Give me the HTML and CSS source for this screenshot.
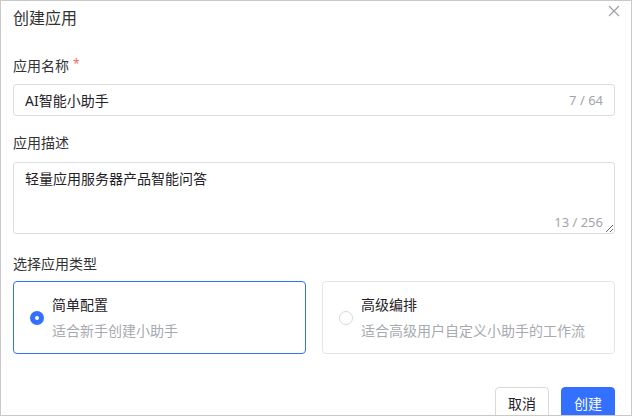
FILE: index.html
```html
<!DOCTYPE html>
<html lang="zh-CN">
<head>
<meta charset="utf-8">
<title>创建应用</title>
<link rel="stylesheet" href="styles.css">
</head>
<body>
<div class="modal">
  <div class="modal-header">
    <span class="modal-title">创建应用</span>
    <button class="close-btn" aria-label="关闭">
      <svg width="12" height="12" viewBox="0 0 12 12"><path d="M1 1L11 11M11 1L1 11" stroke="#9a9ea6" stroke-width="1.1" fill="none"/></svg>
    </button>
  </div>
  <div class="modal-body">
    <div class="field-label first">应用名称<span class="req">*</span></div>
    <div class="input-wrap">
      <input class="text-input" type="text" value="AI智能小助手">
      <span class="count count-input">7 / 64</span>
    </div>

    <div class="field-label">应用描述</div>
    <div class="textarea-wrap">
      <textarea class="text-area">轻量应用服务器产品智能问答</textarea>
      <span class="count count-area">13 / 256</span>
    </div>

    <div class="field-label third">选择应用类型</div>
    <div class="type-grid">
      <div class="type-card selected">
        <span class="radio checked"></span>
        <div class="type-text">
          <div class="type-title">简单配置</div>
          <div class="type-desc">适合新手创建小助手</div>
        </div>
      </div>
      <div class="type-card">
        <span class="radio"></span>
        <div class="type-text">
          <div class="type-title">高级编排</div>
          <div class="type-desc">适合高级用户自定义小助手的工作流</div>
        </div>
      </div>
    </div>

    <div class="footer">
      <button class="btn btn-default">取消</button>
      <button class="btn btn-primary">创建</button>
    </div>
  </div>
</div>
</body>
</html>
```

FILE: styles.css
```css
html, body {
  margin: 0;
  padding: 0;
  background: #ffffff;
}

body {
  font-family: "Noto Sans", "Noto Sans CJK SC", sans-serif;
  color: #1f2329;
}

.modal {
  box-sizing: border-box;
  width: 632px;
  height: 416px;
  border: 1px solid #c9c9c9;
  overflow: hidden;
  position: relative;
  background: #fff;
}

.modal-header {
  height: 34px;
  padding-left: 12px;
  display: flex;
  align-items: center;
}

.modal-title {
  font-size: 16px;
  line-height: 34px;
  color: #333333;
}

.close-btn {
  position: absolute;
  top: 3px;
  right: 10px;
  width: 14px;
  height: 14px;
  padding: 0;
  border: none;
  background: transparent;
  display: flex;
  align-items: center;
  justify-content: center;
}

.modal-body {
  padding: 0 16px 0 12px;
}

.field-label {
  font-size: 14px;
  line-height: 22px;
  color: #333333;
  margin-top: 16px;
  margin-bottom: 8px;
}

.field-label.first {
  margin-top: 20px;
  margin-bottom: 6px;
}

.field-label.third {
  margin-top: 19px;
  margin-bottom: 6px;
}

.req {
  color: #f76a64;
  margin-left: 4px;
  font-size: 12px;
  position: relative;
  top: -3px;
}

.input-wrap, .textarea-wrap {
  position: relative;
}

.text-input, .text-area {
  box-sizing: border-box;
  width: 100%;
  border: 1px solid #dadde2;
  border-radius: 3px;
  font-family: "Noto Sans", "Noto Sans CJK SC", sans-serif;
  font-size: 14px;
  color: #1f2329;
  outline: none;
  background: #fff;
  margin: 0;
  display: block;
}

.text-input {
  height: 32px;
  padding: 0 60px 0 11px;
  line-height: 30px;
}

.text-area {
  height: 72px;
  padding: 5px 11px;
  line-height: 22px;
  resize: vertical;
}

.count {
  position: absolute;
  font-size: 13px;
  color: #a2a5ab;
  line-height: 20px;
}

.count-input {
  right: 12px;
  top: 6px;
}

.count-area {
  right: 12px;
  bottom: 2px;
}

.type-grid {
  display: grid;
  grid-template-columns: 1fr 1fr;
  column-gap: 16px;
}

.type-card {
  box-sizing: border-box;
  height: 73px;
  border: 1px solid #e3e5e9;
  border-radius: 4px;
  padding-left: 16px;
  display: flex;
  align-items: center;
  gap: 8px;
}

.type-card.selected {
  border-color: #3370ff;
}

.radio {
  box-sizing: border-box;
  width: 14px;
  height: 14px;
  border-radius: 50%;
  border: 1px solid #d6d9de;
  background: #fff;
  flex: none;
  position: relative;
}

.radio.checked {
  border: 5px solid #3370ff;
  background: #fff;
}

.type-text {
  display: flex;
  flex-direction: column;
  gap: 4px;
}

.type-title {
  font-size: 14px;
  line-height: 22px;
  color: #1f2329;
}

.type-desc {
  font-size: 14px;
  line-height: 22px;
  color: #a7aab0;
}

.footer {
  margin-top: 33px;
  display: flex;
  justify-content: flex-end;
  gap: 12px;
}

.btn {
  box-sizing: border-box;
  height: 32px;
  width: 54px;
  border-radius: 4px;
  font-family: "Noto Sans", "Noto Sans CJK SC", sans-serif;
  font-size: 14px;
  padding: 0;
  margin: 0;
}

.btn-default {
  background: #fff;
  border: 1px solid #d6d9de;
  color: #1f2329;
}

.btn-primary {
  background: #3370ff;
  border: 1px solid #3370ff;
  color: #fff;
}
```
